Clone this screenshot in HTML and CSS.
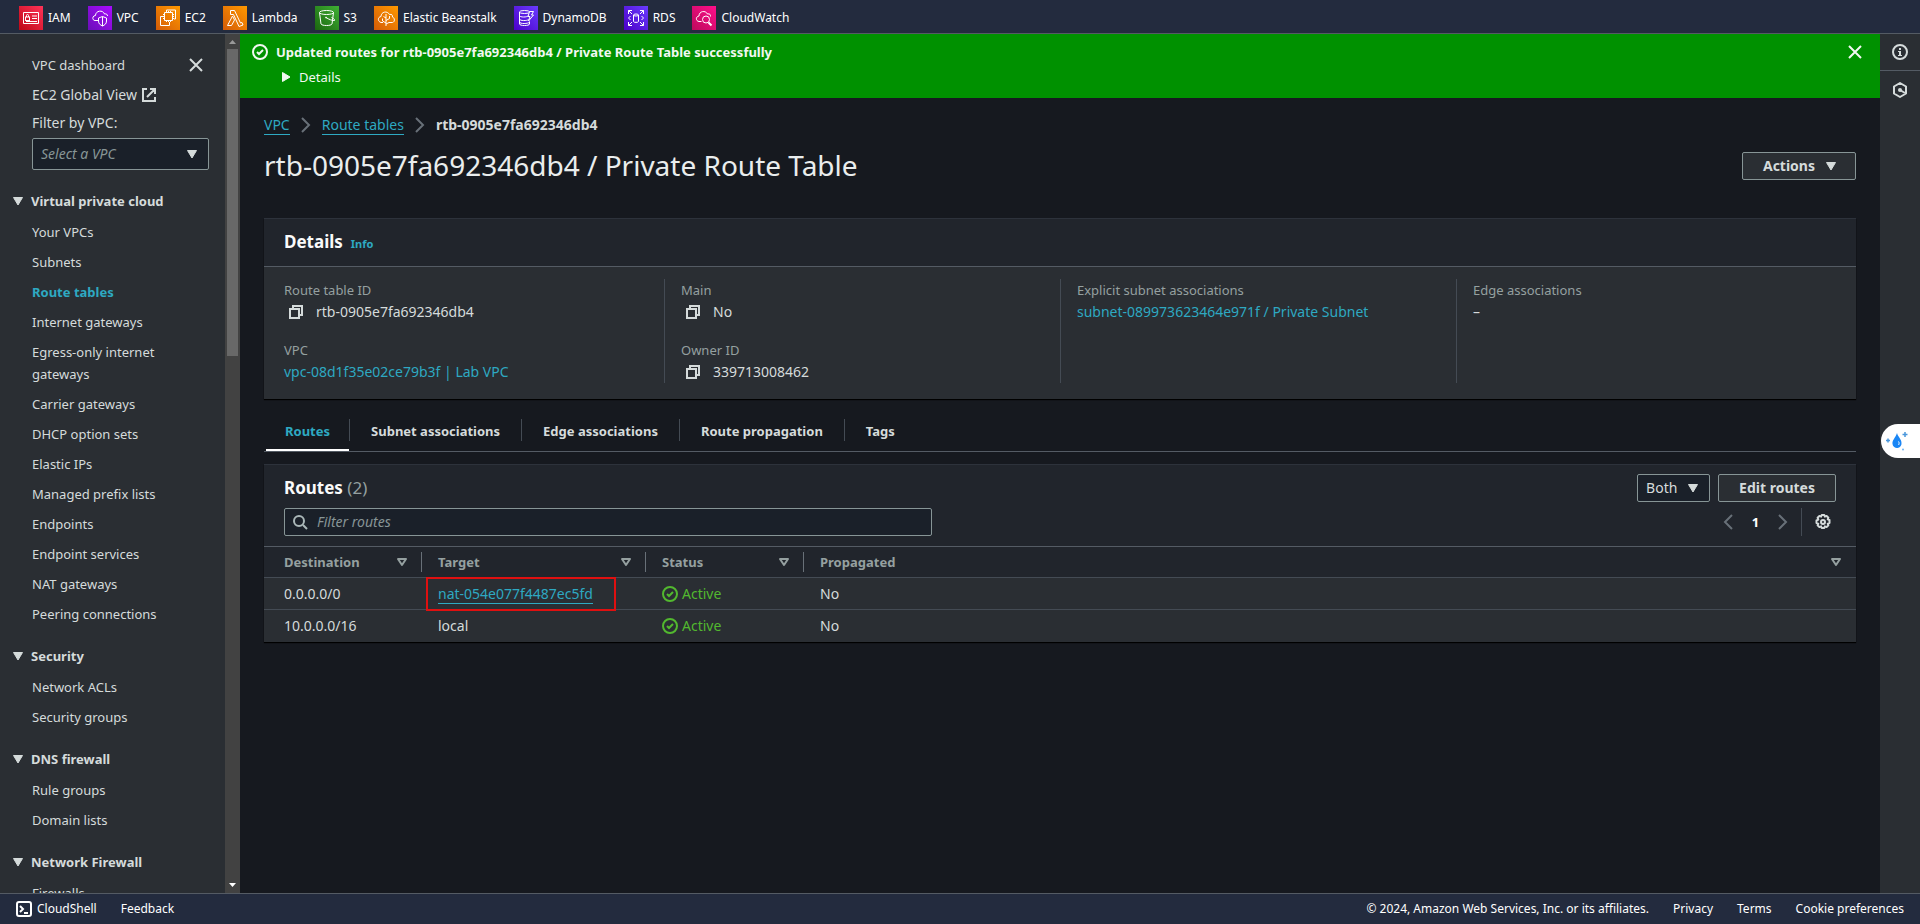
FILE: index.html
```html
<!DOCTYPE html>
<html lang="en">
<head>
<meta charset="utf-8">
<title>Route table details | VPC Console</title>
<link rel="stylesheet" href="styles.css">
</head>
<body>
<svg class="sprite" aria-hidden="true">
  <defs>
    <linearGradient id="g-red" x1="0" y1="1" x2="1" y2="0"><stop offset="0" stop-color="#bd0816"/><stop offset="1" stop-color="#ff3358"/></linearGradient>
    <linearGradient id="g-purple" x1="0" y1="1" x2="1" y2="0"><stop offset="0" stop-color="#6a0fb8"/><stop offset="1" stop-color="#a90bff"/></linearGradient>
    <linearGradient id="g-orange" x1="0" y1="1" x2="1" y2="0"><stop offset="0" stop-color="#d45b07"/><stop offset="1" stop-color="#ff9900"/></linearGradient>
    <linearGradient id="g-green" x1="0" y1="1" x2="1" y2="0"><stop offset="0" stop-color="#1b660f"/><stop offset="1" stop-color="#3fb034"/></linearGradient>
    <linearGradient id="g-blue" x1="0" y1="1" x2="1" y2="0"><stop offset="0" stop-color="#4b00c8"/><stop offset="1" stop-color="#6a3cff"/></linearGradient>
    <linearGradient id="g-pink" x1="0" y1="1" x2="1" y2="0"><stop offset="0" stop-color="#bc0a5c"/><stop offset="1" stop-color="#ff0f8b"/></linearGradient>
  </defs>
  <symbol id="i-down" viewBox="0 0 16 16"><path d="M3.500 4.500h9L8 12z" fill="currentColor" stroke="currentColor" stroke-linejoin="round" stroke-width="1"/></symbol>
  <symbol id="i-right" viewBox="0 0 16 16"><path d="M4.500 3.500v9L12 8z" fill="currentColor" stroke="currentColor" stroke-linejoin="round" stroke-width="1"/></symbol>
  <symbol id="i-sort" viewBox="0 0 16 16"><path d="M4 5h8l-4 6z" fill="none" stroke="currentColor" stroke-linejoin="round" stroke-width="2"/></symbol>
  <symbol id="i-close" viewBox="0 0 16 16"><path d="M2 2l12 12M14 2L2 14" fill="none" stroke="currentColor" stroke-width="2"/></symbol>
  <symbol id="i-chevron" viewBox="0 0 16 16"><path d="M4 1l7 7-7 7" fill="none" stroke="currentColor" stroke-width="2"/></symbol>
  <symbol id="i-check" viewBox="0 0 16 16"><circle cx="8" cy="8" r="7" fill="none" stroke="currentColor" stroke-width="2"/><path d="M5 8l2 2 4-4" fill="none" stroke="currentColor" stroke-width="2"/></symbol>
  <symbol id="i-copy" viewBox="0 0 16 16"><path d="M2 5h9v9H2zM5 5V2h9v9h-3" fill="none" stroke="currentColor" stroke-width="2"/></symbol>
  <symbol id="i-external" viewBox="0 0 16 16"><path d="M6 2H2v12h12v-4M9 2h5v5M14 2l-8 8" fill="none" stroke="currentColor" stroke-width="2"/></symbol>
</svg>
<div class="app">
  <header class="topbar">
    <nav class="services" aria-label="Favorites">
      <a href="#"><svg viewBox="0 0 24 24"><path fill="url(#g-red)" d="M0 0h24v24H0z"/><g fill="none" stroke="#fff"><path d="M4.500 6.500h15v11h-15z"/><rect x="6.500" y="11" width="4" height="3.500"/><path d="M7.500 11V9.500a1 1 0 0 1 2 0V11M13 10h5M13 12.500h5M7 15.500h11"/></g></svg>IAM</a>
      <a href="#"><svg viewBox="0 0 24 24"><path fill="url(#g-purple)" d="M0 0h24v24H0z"/><g fill="none" stroke="#fff"><path d="M10 14.500H7c-3 0-3-5 .5-5 0-5 7.500-6 9-1.500 2-.5 3 .5 3 2"/><path d="M14.500 10.500l4 1.500v3c0 3-2 4-4 5-2-1-4-2-4-5v-3zM14.500 10.500v9.500"/></g></svg>VPC</a>
      <a href="#"><svg viewBox="0 0 24 24"><path fill="url(#g-orange)" d="M0 0h24v24H0z"/><g fill="none" stroke="#fff"><path d="M8.500 6.500h8v8h-8zM10.500 6.500V5M12.500 6.500V5M14.500 6.500V5M10.500 16v-1.500M12.500 16v-1.500M14.500 16v-1.500M8.500 8.500H7M8.500 10.500H7M8.500 12.500H7M18 8.500h-1.500M18 10.500h-1.500M18 12.500h-1.500M10.500 5V4h9v9H18M7 10.500H4.500v9h9V16"/></g></svg>EC2</a>
      <a href="#"><svg viewBox="0 0 24 24"><path fill="url(#g-orange)" d="M0 0h24v24H0z"/><path fill="none" stroke="#fff" d="M7.500 4.500h4l6 12.500 1.500-.5 1 2.500-4 1.500-5.500-12h-3zM4.500 19.500l5-9.500 2 4-3 5.500z"/></svg>Lambda</a>
      <a href="#"><svg viewBox="0 0 24 24"><path fill="url(#g-green)" d="M0 0h24v24H0z"/><g fill="none" stroke="#fff"><ellipse cx="11.500" cy="6.500" rx="7" ry="2"/><path d="M4.500 6.500l1.500 11.500c1 2 10 2 11 0l1.500-11.500M11 11.500c3 2 6 3 8.500 3 .5-1.500-2-2.500-3-3"/><circle cx="11" cy="11.500" r=".5"/></g></svg>S3</a>
      <a href="#"><svg viewBox="0 0 24 24"><path fill="url(#g-orange)" d="M0 0h24v24H0z"/><path fill="none" stroke="#fff" d="M9 16.500H7c-3.500-1-3.500-5.500 0-6 0-5 6.500-6 8.500-2 2.500-.5 3 .5 3 2.500 2.500 1 2.500 5 0 5.500H15M12 8v12M12 17l-3.500-2v-2.500M12 14.500l3.500-2V10M12 18l3-1.500M12 12l-2.500-1.500"/></svg>Elastic Beanstalk</a>
      <a href="#"><svg viewBox="0 0 24 24"><path fill="url(#g-blue)" d="M0 0h24v24H0z"/><g fill="none" stroke="#fff"><ellipse cx="10.500" cy="6" rx="5" ry="1.500"/><path d="M5.500 6v12c0 2 10 2 10 0v-2.500M5.500 9.500c0 2 8 2 9 0M5.500 13c0 2 8 2 9 .5M5.500 16c0 2 9 2 10 0M15.500 5.500h4L17.500 9h2l-5 6 1.500-4.500h-2z"/></g></svg>DynamoDB</a>
      <a href="#"><svg viewBox="0 0 24 24"><path fill="url(#g-blue)" d="M0 0h24v24H0z"/><g fill="none" stroke="#fff"><ellipse cx="12" cy="9" rx="2.500" ry="1"/><path d="M9.500 9v6.500c0 1.200 5 1.200 5 0V9M8 4.500H4.500V8M4.500 4.500L8 8M16 4.500h3.500V8M19.500 4.500L16 8M8 19.500H4.500V16M4.500 19.500L8 16M16 19.500h3.500V16M19.500 19.500L16 16M6.500 10l-2 2 2 2M17.500 10l2 2-2 2"/></g></svg>RDS</a>
      <a href="#"><svg viewBox="0 0 24 24"><path fill="url(#g-pink)" d="M0 0h24v24H0z"/><g fill="none" stroke="#fff"><path d="M9.500 15.500H7c-3.500-.5-3.500-5 0-5.500 0-5 6.500-6 8.500-2 2.500-.5 3 .5 3 2.500"/><circle cx="14" cy="13.500" r="3.500"/><path d="M16.500 16.500l3 3" stroke-width="2"/></g></svg>CloudWatch</a>
    </nav>
  </header>

  <div class="body">
    <aside class="sidebar">
      <nav class="side-nav" aria-label="VPC">
        <div class="side-top">
          <a href="#">VPC dashboard</a>
          <button class="icon-button" aria-label="Close navigation"><svg class="icon"><use href="#i-close"/></svg></button>
        </div>
        <a class="side-external" href="#">EC2 Global View <svg class="icon"><use href="#i-external"/></svg></a>
        <label class="side-label" for="vpc-filter">Filter by VPC:</label>
        <div class="select vpc-select">
          <select id="vpc-filter"><option>Select a VPC</option></select>
          <svg class="icon"><use href="#i-down"/></svg>
        </div>
        <section>
          <h3><svg class="icon"><use href="#i-down"/></svg>Virtual private cloud</h3>
          <ul>
            <li><a href="#">Your VPCs</a></li>
            <li><a href="#">Subnets</a></li>
            <li><a href="#" class="current">Route tables</a></li>
            <li><a href="#">Internet gateways</a></li>
            <li><a href="#">Egress-only internet gateways</a></li>
            <li><a href="#">Carrier gateways</a></li>
            <li><a href="#">DHCP option sets</a></li>
            <li><a href="#">Elastic IPs</a></li>
            <li><a href="#">Managed prefix lists</a></li>
            <li><a href="#">Endpoints</a></li>
            <li><a href="#">Endpoint services</a></li>
            <li><a href="#">NAT gateways</a></li>
            <li><a href="#">Peering connections</a></li>
          </ul>
        </section>
        <section>
          <h3><svg class="icon"><use href="#i-down"/></svg>Security</h3>
          <ul>
            <li><a href="#">Network ACLs</a></li>
            <li><a href="#">Security groups</a></li>
          </ul>
        </section>
        <section>
          <h3><svg class="icon"><use href="#i-down"/></svg>DNS firewall</h3>
          <ul>
            <li><a href="#">Rule groups</a></li>
            <li><a href="#">Domain lists</a></li>
          </ul>
        </section>
        <section>
          <h3><svg class="icon"><use href="#i-down"/></svg>Network Firewall</h3>
          <ul>
            <li><a href="#">Firewalls</a></li>
          </ul>
        </section>
      </nav>
      <div class="scrollbar" aria-hidden="true">
        <svg class="scroll-arrow up" viewBox="0 0 15 15"><path d="M4 10h7L7.500 6z" fill="#9a9a9a"/></svg>
        <div class="thumb"></div>
        <svg class="scroll-arrow" viewBox="0 0 15 15"><path d="M4 5h7L7.500 9z" fill="#fff"/></svg>
      </div>
    </aside>

    <main class="main">
      <div class="flash" role="status">
        <svg class="icon"><use href="#i-check"/></svg>
        <div class="flash-text">
          <strong>Updated routes for rtb-0905e7fa692346db4 / Private Route Table successfully</strong>
          <details><summary><svg class="icon"><use href="#i-right"/></svg>Details</summary></details>
        </div>
        <button class="icon-button" aria-label="Dismiss"><svg class="icon"><use href="#i-close"/></svg></button>
      </div>

      <div class="content">
        <nav class="breadcrumb" aria-label="Breadcrumb">
          <a href="#">VPC</a>
          <svg class="icon"><use href="#i-chevron"/></svg>
          <a href="#">Route tables</a>
          <svg class="icon"><use href="#i-chevron"/></svg>
          <strong>rtb-0905e7fa692346db4</strong>
        </nav>
        <div class="page-head">
          <h1>rtb-0905e7fa692346db4 / Private Route Table</h1>
          <button class="button menu-button">Actions <svg class="icon"><use href="#i-down"/></svg></button>
        </div>

        <section class="panel">
          <header class="panel-head"><h2>Details</h2><a class="info" href="#">Info</a></header>
          <div class="facts">
            <dl>
              <div><dt>Route table ID</dt><dd><button class="icon-button" aria-label="Copy route table ID"><svg class="icon"><use href="#i-copy"/></svg></button>rtb-0905e7fa692346db4</dd></div>
              <div><dt>VPC</dt><dd><a href="#">vpc-08d1f35e02ce79b3f | Lab VPC</a></dd></div>
            </dl>
            <dl>
              <div><dt>Main</dt><dd><button class="icon-button" aria-label="Copy main"><svg class="icon"><use href="#i-copy"/></svg></button>No</dd></div>
              <div><dt>Owner ID</dt><dd><button class="icon-button" aria-label="Copy owner ID"><svg class="icon"><use href="#i-copy"/></svg></button>339713008462</dd></div>
            </dl>
            <dl>
              <div><dt>Explicit subnet associations</dt><dd><a href="#">subnet-089973623464e971f / Private Subnet</a></dd></div>
            </dl>
            <dl>
              <div><dt>Edge associations</dt><dd>–</dd></div>
            </dl>
          </div>
        </section>

        <div class="tabs" role="tablist">
          <button role="tab" aria-selected="true">Routes</button>
          <button role="tab" aria-selected="false">Subnet associations</button>
          <button role="tab" aria-selected="false">Edge associations</button>
          <button role="tab" aria-selected="false">Route propagation</button>
          <button role="tab" aria-selected="false">Tags</button>
        </div>

        <section class="panel">
          <header class="routes-head">
            <div class="routes-row">
              <h2>Routes <span>(2)</span></h2>
              <div class="actions">
                <div class="select both-select">
                  <select aria-label="Route type"><option>Both</option></select>
                  <svg class="icon"><use href="#i-down"/></svg>
                </div>
                <button class="button">Edit routes</button>
              </div>
            </div>
            <div class="routes-row">
              <label class="search">
                <svg class="icon" viewBox="0 0 16 16"><circle cx="7" cy="7" r="5" fill="none" stroke="currentColor" stroke-width="2"/><path d="M11 11l4 4" stroke="currentColor" stroke-width="2"/></svg>
                <input type="text" placeholder="Filter routes" aria-label="Filter routes">
              </label>
              <div class="pager">
                <button class="icon-button step" aria-label="Previous page"><svg class="icon flip"><use href="#i-chevron"/></svg></button>
                <button class="icon-button page">1</button>
                <button class="icon-button step" aria-label="Next page"><svg class="icon"><use href="#i-chevron"/></svg></button>
                <button class="icon-button gear" aria-label="Preferences"><svg class="icon" viewBox="0 0 16 16"><g fill="none" stroke="currentColor"><path stroke-width="2" stroke-linejoin="round" d="M6.700 1h2.600l.6 1.600 1.700-.7 1.800 1.800-.7 1.700 1.800.6v3l-1.800.6.700 1.700-1.800 1.800-1.700-.7-.6 1.600H6.700l-.6-1.600-1.700.7-1.800-1.800.7-1.700L1.500 9V6.500l1.800-.9-.7-1.900 1.800-1.800 1.700.7z"/><circle cx="8" cy="8" r="2" stroke-width="2"/></g></svg></button>
              </div>
            </div>
          </header>
          <table>
            <colgroup><col class="c-dest"><col class="c-target"><col class="c-status"><col></colgroup>
            <thead>
              <tr>
                <th><button>Destination<svg class="icon"><use href="#i-sort"/></svg></button></th>
                <th><button>Target<svg class="icon"><use href="#i-sort"/></svg></button></th>
                <th><button>Status<svg class="icon"><use href="#i-sort"/></svg></button></th>
                <th><button>Propagated<svg class="icon"><use href="#i-sort"/></svg></button></th>
              </tr>
            </thead>
            <tbody>
              <tr><td>0.0.0.0/0</td><td class="marked"><a href="#">nat-054e077f4487ec5fd</a></td><td><span class="status"><svg class="icon"><use href="#i-check"/></svg>Active</span></td><td>No</td></tr>
              <tr><td>10.0.0.0/16</td><td>local</td><td><span class="status"><svg class="icon"><use href="#i-check"/></svg>Active</span></td><td>No</td></tr>
            </tbody>
          </table>
        </section>
      </div>
    </main>

    <aside class="rail">
      <button class="icon-button" aria-label="Info panel"><svg class="icon" viewBox="0 0 16 16"><circle cx="8" cy="8" r="7" fill="none" stroke="currentColor" stroke-width="2"/><path d="M7 4h2v2H7zM6 7h3v4h1v1H6v-1h1V8H6z" fill="currentColor"/></svg></button>
      <button class="icon-button" aria-label="Amazon Q"><svg class="icon" viewBox="0 0 16 16"><path d="M8 1l6 3.500v7L8 15l-6-3.500v-7z" fill="none" stroke="currentColor" stroke-width="2" stroke-linejoin="round"/><circle cx="8" cy="8" r="2" fill="currentColor"/><path d="M8 8l5 3" stroke="currentColor" stroke-width="2"/></svg></button>
      <button class="widget" aria-label="Assistant"><svg viewBox="0 0 24 24"><path d="M12 4c1 4 4.500 6 4.500 10a4.500 4.500 0 0 1-9 1C7 11 10.500 9 12 4z" fill="#1a86f5"/><path d="M13.500 12.500c.8 1 .8 2.500 0 3.500" fill="none" stroke="#fff"/><path d="M20 3v5M17.500 5.500h5M3 9.500v4M1 11.500h4" stroke="#4a97dc" stroke-width="1.500"/><circle cx="18" cy="20.500" r="1" fill="#6fb2ee"/></svg></button>
    </aside>
  </div>

  <footer class="footer">
    <button class="shell"><svg class="icon" viewBox="0 0 16 16"><rect x="1" y="1" width="14" height="14" rx="2" fill="none" stroke="currentColor" stroke-width="2"/><path d="M4 5l3 3-3 3M8 12h4" fill="none" stroke="currentColor" stroke-width="2"/></svg>CloudShell</button>
    <button>Feedback</button>
    <span class="legal">© 2024, Amazon Web Services, Inc. or its affiliates.</span>
    <a href="#">Privacy</a>
    <a href="#">Terms</a>
    <a href="#">Cookie preferences</a>
  </footer>
</div>
</body>
</html>
```
FILE: styles.css
```css
*, *::before, *::after { box-sizing: border-box; }

body {
  margin: 0;
  background: #16191f;
  color: #d5dbdb;
  font: 13px/22px "Noto Sans", sans-serif;
}

a { color: inherit; text-decoration: none; }
button, input, select { font: inherit; color: inherit; }
button { background: none; border: 0; padding: 0; cursor: pointer; }
h1, h2, h3, ul, dl, dd { margin: 0; padding: 0; }
ul { list-style: none; }

.sprite { position: absolute; width: 0; height: 0; }
.icon { width: 16px; height: 16px; flex: none; display: block; }
.icon-button { display: flex; align-items: center; justify-content: center; }

.app { display: flex; flex-direction: column; height: 100vh; }
.body { display: flex; flex: 1; min-height: 0; }

/* Top bar */
.topbar {
  background: #232b3e;
  border-bottom: 1px solid #545b64;
  padding: 6px 19px 3px;
}
.services { display: flex; gap: 17px; color: #fff; font-size: 12px; line-height: 24px; }
.services a { display: flex; gap: 5px; }
.services svg { width: 24px; height: 24px; }

/* Sidebar */
.sidebar { display: flex; width: 240px; flex: none; background: #2a2e33; overflow: hidden; }
.side-nav { flex: 1; padding: 20px 16px 0 32px; overflow: hidden; }
.side-top { display: flex; justify-content: space-between; padding-right: 5px; }
.side-external { display: flex; gap: 4px; align-items: center; margin: 8px 0 6px; font-size: 14px; }
.side-label { display: block; margin-bottom: 4px; font-size: 14px; }
.side-nav section { margin-top: 20px; }
.side-nav h3 { display: flex; align-items: center; gap: 5px; margin: 0 0 9px -22px; font-size: 13px; font-weight: 700; }
.side-nav li { margin-bottom: 8px; }
.current { color: #2ea9c2; font-weight: 700; }

.select { position: relative; }
.select select {
  appearance: none;
  width: 100%;
  padding: 0 8px;
  border: 1px solid #879596;
  border-radius: 2px;
  background: #1a2029;
  font-size: 14px;
}
.select .icon { position: absolute; right: 9px; top: 50%; margin-top: -8px; pointer-events: none; }
.select.vpc-select select { height: 32px; color: #879596; font-style: italic; }

.scrollbar { display: flex; flex-direction: column; width: 15px; background: #424242; }
.scroll-arrow { width: 15px; height: 15px; }
.scrollbar .thumb { flex: 1; margin: 0 2px; background: linear-gradient(#686868 37%, transparent 37%); }

/* Flash message */
.main { flex: 1; min-width: 0; overflow: hidden; }
.flash { display: flex; gap: 8px; padding: 7px 16px 7px 12px; background: #009100; color: #f2f8f2; }
.flash > .icon { margin-top: 3px; }
.flash-text { flex: 1; }
.flash-text strong { display: block; margin-bottom: 3px; }
.flash > .icon-button { width: 18px; height: 22px; }
.flash summary { display: inline-flex; align-items: center; gap: 5px; padding-left: 2px; list-style: none; }
.flash details { height: 25px; }

.content { padding: 16px 24px; }
.breadcrumb { display: flex; align-items: center; gap: 8px; font-size: 14px; }
.breadcrumb a, td a { color: #2ea9c2; border-bottom: 1px solid #2ea9c2; line-height: 18px; }
.breadcrumb .icon { color: #687078; }

.page-head { display: flex; justify-content: space-between; align-items: flex-start; margin: 11px 0 35px; }
.page-head h1 { font-size: 28px; font-weight: 400; line-height: 36px; color: #eaeded; }
.button {
  display: flex;
  align-items: center;
  gap: 8px;
  height: 28px;
  padding: 0 20px;
  border: 1px solid #879596;
  border-radius: 2px;
  background: #2a2e33;
  font-size: 14px;
  font-weight: 700;
}
.menu-button { margin-top: 5px; padding-right: 16px; }

/* Panels */
.panel { background: #2a2e33; border-top: 1px solid #2d323b; box-shadow: 0 1px 1px #000; }
.panel h2 { font-size: 17px; font-weight: 700; color: #fafafa; }
.panel-head { display: flex; align-items: baseline; gap: 8px; padding: 12px 20px 11px; background: #21252c; border-bottom: 1px solid #545b64; }
.info { color: #2ea9c2; font-size: 11px; font-weight: 700; }

.facts { display: grid; grid-template-columns: repeat(4, 1fr); padding: 12px 4px 16px; }
.facts dl { display: flex; flex-direction: column; gap: 16px; padding: 0 16px; border-left: 1px solid #444b54; }
.facts dl:first-child { border-left: 0; }
.facts dt { color: #95a0a0; }
.facts dd { display: flex; min-height: 22px; font-size: 14px; }
.facts dd a { color: #2ea9c2; }
.facts dd .icon-button { width: 24px; margin-right: 8px; }

.tabs { display: flex; align-items: center; margin: 16px 0 12px; border-bottom: 1px solid #545b64; padding: 0 2px; }
.tabs button { position: relative; height: 36px; padding: 0 19px 4px; font-weight: 700; }
.tabs button + button { padding: 0 21px 4px 22px; }
.tabs button + button::before { content: ""; position: absolute; left: 0; top: 4px; height: 22px; border-left: 1px solid #444b54; }
.tabs [aria-selected="true"] { color: #2ea9c2; box-shadow: inset 0 -2px #fff; }

/* Routes */
.routes-head { display: flex; flex-direction: column; gap: 6px; padding: 9px 20px 10px; background: #21252c; border-bottom: 1px solid #545b64; }
.routes-row { display: flex; justify-content: space-between; align-items: center; }
.routes-row h2 span { color: #95a0a0; font-weight: 400; }
.actions { display: flex; gap: 8px; }
.both-select { width: 73px; }
.both-select select { height: 28px; }
.search { display: flex; align-items: center; gap: 9px; width: 648px; height: 28px; padding: 0 7px; border: 1px solid #879596; border-radius: 2px; background: #1a2029; color: #aab7b8; }
.search input { flex: 1; min-width: 0; padding: 0; border: 0; background: none; outline: 0; font-size: 14px; }
.search input::placeholder { color: #879596; font-style: italic; opacity: 1; }
.pager { display: flex; align-items: center; }
.pager .step { width: 28px; color: #687078; }
.pager .page { width: 27px; color: #fff; font-weight: 700; }
.pager .gear { height: 28px; margin-left: 4px; padding: 0 5px 0 13px; border-left: 1px solid #444b54; }
.flip { transform: rotate(180deg); }

table { width: 100%; table-layout: fixed; border-collapse: collapse; }
.c-dest { width: 158px; }
.c-target { width: 224px; }
.c-status { width: 158px; }
th { position: relative; padding: 0; background: #21252c; }
th button { display: flex; width: 100%; height: 30px; align-items: center; justify-content: space-between; padding: 0 12px 0 16px; color: #95a0a0; font-weight: 700; }
th:first-child button { padding-left: 20px; }
th + th::before { content: ""; position: absolute; left: -1px; top: 5px; height: 20px; border-left: 1px solid #687078; }
td { height: 32px; padding: 4px 16px; border-top: 1px solid #444b54; font-size: 14px; white-space: nowrap; }
td:first-child { padding-left: 20px; }
.marked { position: relative; }
.marked::after { content: ""; position: absolute; left: 4px; top: -1px; width: 190px; height: 34px; border: 2px solid #df1010; pointer-events: none; }
.status { display: flex; align-items: center; gap: 4px; color: #52b82f; }

/* Right rail */
.rail { position: relative; width: 40px; flex: none; background: #2a2e33; }
.rail .icon-button { width: 100%; height: 37px; border-bottom: 1px solid #545b64; }
.rail .icon-button + .icon-button { border: 0; }
.widget { position: absolute; right: 0; top: 390px; width: 39px; height: 34px; padding: 4px; border-radius: 17px 0 0 17px; background: #fff; }
.widget svg { display: block; width: 24px; height: 24px; }

/* Footer */
.footer { display: flex; align-items: center; gap: 24px; height: 31px; padding: 0 16px; background: #232b3e; border-top: 1px solid #545b64; color: #fff; font-size: 12px; }
.shell { display: flex; align-items: center; gap: 5px; }
.legal { margin-left: auto; }
```
